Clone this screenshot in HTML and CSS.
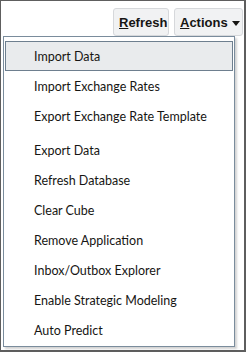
FILE: index.html
```html
<!DOCTYPE html>
<html>
<head>
<meta charset="utf-8">
<link rel="stylesheet" href="styles.css">
</head>
<body>
<div class="frame">
  <div class="toolbar">
    <button class="btn btn-refresh"><span><span class="u">R</span>efresh</span></button>
    <button class="btn btn-actions"><span><span class="u">A</span>ctions</span><span class="caret"></span></button>
  </div>
  <div class="menu">
    <div class="item active">Import Data</div>
    <div class="item">Import Exchange Rates</div>
    <div class="item">Export Exchange Rate Template</div>
    <div class="sep"></div>
    <div class="item">Export Data</div>
    <div class="item">Refresh Database</div>
    <div class="item">Clear Cube</div>
    <div class="item">Remove Application</div>
    <div class="item">Inbox/Outbox Explorer</div>
    <div class="item">Enable Strategic Modeling</div>
    <div class="item">Auto Predict</div>
  </div>
</div>
</body>
</html>
```
FILE: styles.css
```css
html, body {
  margin: 0;
  padding: 0;
  background: #fff;
}
.frame {
  position: relative;
  box-sizing: border-box;
  width: 246px;
  height: 352px;
  border: 1px solid #5e5e5e;
  border-right-width: 2px;
  border-bottom-width: 2px;
  font-family: Lato, "Liberation Sans", sans-serif;
  color: #161513;
}
.toolbar {
  display: flex;
  justify-content: flex-end;
  gap: 5px;
  padding: 7px 1px 0 0;
}
.btn {
  box-sizing: border-box;
  height: 28px;
  padding: 0 0 0 5px;
  background: #f1f2f3;
  border: 1px solid #d6d8db;
  border-radius: 3px;
  font-family: "Liberation Sans", Arial, sans-serif;
  font-weight: bold;
  font-size: 13px;
  color: #161513;
  display: flex;
  align-items: center;
}
.btn-refresh { width: 56px; }
.btn-actions { width: 69px; gap: 4px; }
.u { text-decoration: underline; }
.caret {
  width: 0;
  height: 0;
  border-left: 4.5px solid transparent;
  border-right: 4.5px solid transparent;
  border-top: 5px solid #161513;
  margin-top: 2px;
}
.menu {
  position: absolute;
  left: 2px;
  top: 35px;
  width: 232px;
  box-sizing: border-box;
  background: #fff;
  border: 1px solid #7a8c9c;
  box-shadow: 2px 2px 2px rgba(0,0,0,0.18);
  padding: 4px 1px 1px;
}
.item {
  box-sizing: border-box;
  height: 30px;
  display: flex;
  align-items: center;
  padding-left: 29px;
  font-size: 12.5px;
  white-space: nowrap;
}
.item.active {
  background: #e9ebed;
  border: 1px solid #6e7f8f;
  padding-left: 28px;
}
.sep { height: 4px; }
```
